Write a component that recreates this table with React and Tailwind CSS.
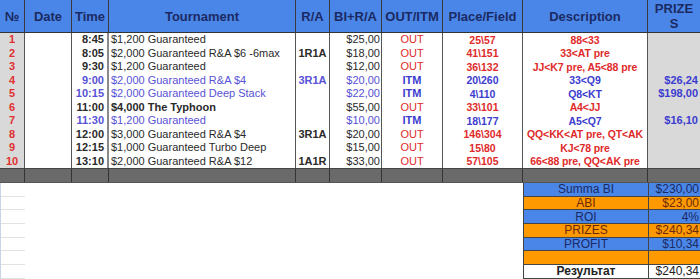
import React from 'react';

const rows = [
  { n: 1, time: '8:45', name: '$1,200 Guaranteed', ra: '', bi: '$25,00', res: 'OUT', place: '25\\57', desc: '88<33', prize: '' },
  { n: 2, time: '8:05', name: '$2,000 Guaranteed R&A $6 -6max', ra: '1R1A', bi: '$18,00', res: 'OUT', place: '41\\151', desc: '33<AT pre', prize: '' },
  { n: 3, time: '9:30', name: '$1,200 Guaranteed', ra: '', bi: '$12,00', res: 'OUT', place: '36\\132', desc: 'JJ<K7 pre, A5<88 pre', prize: '' },
  { n: 4, time: '9:00', name: '$2,000 Guaranteed R&A $4', ra: '3R1A', bi: '$20,00', res: 'ITM', place: '20\\260', desc: '33<Q9', prize: '$26,24' },
  { n: 5, time: '10:15', name: '$2,000 Guaranteed Deep Stack', ra: '', bi: '$22,00', res: 'ITM', place: '4\\110', desc: 'Q8<KT', prize: '$198,00' },
  { n: 6, time: '11:00', name: '$4,000 The Typhoon', ra: '', bi: '$55,00', res: 'OUT', place: '33\\101', desc: 'A4<JJ', prize: '', bold: true },
  { n: 7, time: '11:30', name: '$1,200 Guaranteed', ra: '', bi: '$10,00', res: 'ITM', place: '18\\177', desc: 'A5<Q7', prize: '$16,10' },
  { n: 8, time: '12:00', name: '$3,000 Guaranteed R&A $4', ra: '3R1A', bi: '$20,00', res: 'OUT', place: '146\\304', desc: 'QQ<KK<AT pre, QT<AK', prize: '' },
  { n: 9, time: '12:15', name: '$1,000 Guaranteed Turbo Deep', ra: '', bi: '$15,00', res: 'OUT', place: '15\\80', desc: 'KJ<78 pre', prize: '' },
  { n: 10, time: '13:10', name: '$2,000 Guaranteed R&A $12', ra: '1A1R', bi: '$33,00', res: 'OUT', place: '57\\105', desc: '66<88 pre, QQ<AK pre', prize: '' },
];

const summary = [
  { label: 'Summa BI', value: '$230,00', bg: 'bg-[#4a86e8]', fg: 'text-[#1b2a63]' },
  { label: 'ABI', value: '$23,00', bg: 'bg-[#ff9900]', fg: 'text-[#6b2a05]' },
  { label: 'ROI', value: '4%', bg: 'bg-[#4a86e8]', fg: 'text-[#1b2a63]' },
  { label: 'PRIZES', value: '$240,34', bg: 'bg-[#ff9900]', fg: 'text-[#6b2a05]' },
  { label: 'PROFIT', value: '$10,34', bg: 'bg-[#4a86e8]', fg: 'text-[#1b2a63]' },
  { label: '', value: '', bg: 'bg-[#ff9900]', fg: 'text-[#6b2a05]' },
  { label: 'Результат', value: '$240,34', bg: 'bg-white', fg: 'text-[#222]', strong: true },
];

const cols = 'grid grid-cols-[25px_47px_37px_187px_34px_52px_61px_80px_125px_52px]';
const headers = ['№', 'Date', 'Time', 'Tournament', 'R/A', 'BI+R/A', 'OUT/ITM', 'Place/Field', 'Description'];

function App() {
  return (
    <div className="w-[700px] h-[279px] overflow-hidden bg-white text-[11px] leading-none" style={{ fontFamily: '"Liberation Sans", Arial, sans-serif' }}>
      <div className={`${cols} h-[33px] bg-[#4a86e8] border-b border-[#333] text-[#1b2a63] font-bold text-[13px]`}>
        {headers.map((h) => (
          <div key={h} className="flex items-center justify-center border-r border-[#3a3a3a]">{h}</div>
        ))}
        <div className="flex flex-col items-center justify-center leading-[15px]">
          <span>PRIZE</span>
          <span>S</span>
        </div>
      </div>

      {rows.map((r) => {
        const itm = r.res === 'ITM';
        const main = itm ? 'text-[#5752d6]' : 'text-[#2a2a2a]';
        const accent = itm ? 'text-[#3c3ccf]' : 'text-[#e02a2a]';
        return (
          <div key={r.n} className={`${cols} h-[13.5px]`}>
            <div className="bg-[#d9d9d9] border-r border-[#555] flex items-center justify-center text-[#e03030] font-bold">{r.n}</div>
            <div className="border-r border-[#555]"></div>
            <div className={`border-r-2 border-[#8a8a8a] flex items-center justify-end pr-[3px] font-bold ${main}`}>{r.time}</div>
            <div className={`border-r border-[#555] flex items-center pl-[2px] whitespace-nowrap ${main} ${r.bold ? 'font-bold' : ''}`}>{r.name}</div>
            <div className={`border-r border-[#555] flex items-center justify-center font-bold ${main}`}>{r.ra}</div>
            <div className={`border-r border-[#555] flex items-center justify-end pr-[1px] ${main}`}>{r.bi}</div>
            <div className={`border-r border-[#555] flex items-center justify-center ${accent} ${itm ? 'font-bold' : ''}`}>{r.res}</div>
            <div className={`border-r border-[#555] flex items-center justify-center font-bold text-[10.5px] ${accent}`}>{r.place}</div>
            <div className={`border-r border-[#555] flex items-center justify-center font-bold whitespace-nowrap text-[10.5px] tracking-[-0.1px] ${accent}`}>{r.desc}</div>
            <div className="bg-[#d9d9d9] flex items-center justify-end pr-[2px] font-bold text-[#3c3ccf]">{r.prize}</div>
          </div>
        );
      })}

      <div className={`${cols} h-[15px] bg-[#6a6a6a] border-t border-[#444] border-b border-b-[#555]`}>
        {Array.from({ length: 10 }).map((_, i) => (
          <div key={i} className={i < 9 ? 'border-r border-[#333]' : ''}></div>
        ))}
      </div>

      <div className="flex">
        <div className="w-[523px] flex">
          <div className="w-[25px] border-l border-[#c9d4e6] flex flex-col">
            {Array.from({ length: 7 }).map((_, i) => (
              <div key={i} className="h-[13.7px] border-b border-[#e2e2e2]"></div>
            ))}
          </div>
          <div className="flex-1"></div>
        </div>
        <div className="w-[177px] border-l border-[#444]">
          {summary.map((s, i) => (
            <div key={i} className={`flex h-[13.7px] border-b border-[#444] ${s.bg} ${s.fg} text-[12px]`}>
              <div className={`w-[125px] border-r border-[#444] flex items-center justify-center ${s.strong ? 'font-bold' : ''}`}>{s.label}</div>
              <div className="flex-1 flex items-center justify-end pr-[1px]">{s.value}</div>
            </div>
          ))}
        </div>
      </div>
    </div>
  );
}

export default App;
